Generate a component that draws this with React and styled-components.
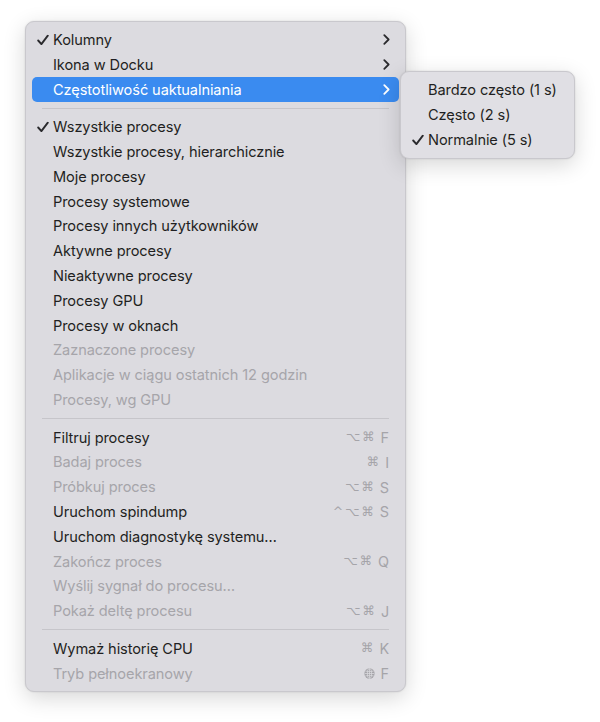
import React from "react";
import styled, { createGlobalStyle } from "styled-components";

const Global = createGlobalStyle`
  html, body { margin: 0; padding: 0; background: #ffffff; }
  body { font-family: Inter, "Noto Sans", "DejaVu Sans", sans-serif; -webkit-font-smoothing: antialiased; }
`;

const Page = styled.div`
  width: 600px;
  height: 722px;
  padding: 21px 0 0 25px;
  box-sizing: border-box;
`;

const Menu = styled.div`
  position: relative;
  width: 381px;
  box-sizing: border-box;
  background: #dcdbe0;
  border: 1px solid #c9c8cd;
  border-radius: 9px;
  padding: 5.6px 6px 5px;
  box-shadow: 0 6px 22px rgba(0, 0, 0, 0.16), 0 0 2px rgba(0, 0, 0, 0.12);
  display: flex;
  flex-direction: column;
`;

const SubMenu = styled(Menu)`
  position: absolute;
  left: 374px;
  top: 49px;
  width: 175px;
  background: #e0dfe4;
  padding: 5.6px 6px 5.6px;
  z-index: 2;
`;

const Row = styled.div`
  height: 24.8px;
  display: flex;
  align-items: center;
  padding: 0 10px 0 21px;
  position: relative;
  border-radius: 5px;
  font-size: 14.6px;
  letter-spacing: -0.1px;
  color: ${(p) => (p.$active ? "#ffffff" : p.$disabled ? "#a6a5aa" : "#1f1f22")};
  background: ${(p) => (p.$active ? "#3a8bf0" : "transparent")};
`;

const Label = styled.span`
  flex: 1;
  white-space: nowrap;
`;

const Check = styled.svg`
  position: absolute;
  left: 5px;
  top: 50%;
  transform: translateY(-50%);
`;

const Chevron = styled.svg`
  margin-right: -1px;
`;

const Shortcut = styled.span`
  display: flex;
  align-items: center;
  gap: 2px;
  color: #a5a4a9;
  font-size: 14px;
`;

const Mod = styled.span`
  font-family: "DejaVu Sans", sans-serif;
  font-size: 12.5px;
  line-height: 1;
  text-align: center;
`;

const Key = styled.span`
  font-family: Inter, sans-serif;
  font-size: 14.4px;
  margin-left: 4px;
`;

const Separator = styled.div`
  height: 12.8px;
  display: flex;
  align-items: center;
  padding: 0 10px;
  &::after {
    content: "";
    flex: 1;
    height: 1px;
    background: #c6c5ca;
  }
`;

const CheckIcon = ({ color }) => (
  <Check width="12" height="11" viewBox="0 0 12 11">
    <path d="M1.2 6 L4.4 9.6 L10.8 1.2" fill="none" stroke={color} strokeWidth="1.9" strokeLinecap="round" strokeLinejoin="round" />
  </Check>
);

const ChevronIcon = ({ color }) => (
  <Chevron width="7" height="11" viewBox="0 0 7 11">
    <path d="M1.3 1.2 L5.6 5.5 L1.3 9.8" fill="none" stroke={color} strokeWidth="1.8" strokeLinecap="round" strokeLinejoin="round" />
  </Chevron>
);

const Globe = () => (
  <svg width="11" height="11" viewBox="0 0 12 12">
    <circle cx="6" cy="6" r="5.6" fill="#a5a4a9" />
    <g fill="none" stroke="#dcdbe0" strokeWidth="0.8">
      <ellipse cx="6" cy="6" rx="2.3" ry="5.3" />
      <line x1="0.7" y1="6" x2="11.3" y2="6" />
      <line x1="6" y1="0.7" x2="6" y2="11.3" />
      <path d="M1.5 3.4 Q6 4.6 10.5 3.4" />
      <path d="M1.5 8.6 Q6 7.4 10.5 8.6" />
    </g>
  </svg>
);

const Item = ({ label, checked, submenu, active, disabled, keys, globe }) => {
  const iconColor = active ? "#ffffff" : "#2a2a2d";
  return (
    <Row $active={active} $disabled={disabled}>
      {checked && <CheckIcon color={iconColor} />}
      <Label>{label}</Label>
      {submenu && <ChevronIcon color={iconColor} />}
      {(keys || globe) && (
        <Shortcut>
          {globe && <Globe />}
          {keys &&
            keys.mods.map((m, i) => <Mod key={i}>{m}</Mod>)}
          <Key>{keys ? keys.key : "F"}</Key>
        </Shortcut>
      )}
    </Row>
  );
};

const groups = [
  [
    { label: "Kolumny", checked: true, submenu: true },
    { label: "Ikona w Docku", submenu: true },
    { label: "Częstotliwość uaktualniania", submenu: true, active: true },
  ],
  [
    { label: "Wszystkie procesy", checked: true },
    { label: "Wszystkie procesy, hierarchicznie" },
    { label: "Moje procesy" },
    { label: "Procesy systemowe" },
    { label: "Procesy innych użytkowników" },
    { label: "Aktywne procesy" },
    { label: "Nieaktywne procesy" },
    { label: "Procesy GPU" },
    { label: "Procesy w oknach" },
    { label: "Zaznaczone procesy", disabled: true },
    { label: "Aplikacje w ciągu ostatnich 12 godzin", disabled: true },
    { label: "Procesy, wg GPU", disabled: true },
  ],
  [
    { label: "Filtruj procesy", keys: { mods: ["⌥", "⌘"], key: "F" } },
    { label: "Badaj proces", disabled: true, keys: { mods: ["⌘"], key: "I" } },
    { label: "Próbkuj proces", disabled: true, keys: { mods: ["⌥", "⌘"], key: "S" } },
    { label: "Uruchom spindump", keys: { mods: ["^", "⌥", "⌘"], key: "S" } },
    { label: "Uruchom diagnostykę systemu…" },
    { label: "Zakończ proces", disabled: true, keys: { mods: ["⌥", "⌘"], key: "Q" } },
    { label: "Wyślij sygnał do procesu…", disabled: true },
    { label: "Pokaż deltę procesu", disabled: true, keys: { mods: ["⌥", "⌘"], key: "J" } },
  ],
  [
    { label: "Wymaż historię CPU", keys: { mods: ["⌘"], key: "K" } },
    { label: "Tryb pełnoekranowy", disabled: true, globe: true },
  ],
];

const subItems = [
  { label: "Bardzo często (1 s)" },
  { label: "Często (2 s)" },
  { label: "Normalnie (5 s)", checked: true },
];

export default function App() {
  return (
    <>
      <Global />
      <Page>
        <Menu>
          {groups.map((g, gi) => (
            <React.Fragment key={gi}>
              {gi > 0 && <Separator />}
              {g.map((it) => (
                <Item key={it.label} {...it} />
              ))}
            </React.Fragment>
          ))}
          <SubMenu>
            {subItems.map((it) => (
              <Item key={it.label} {...it} />
            ))}
          </SubMenu>
        </Menu>
      </Page>
    </>
  );
}
